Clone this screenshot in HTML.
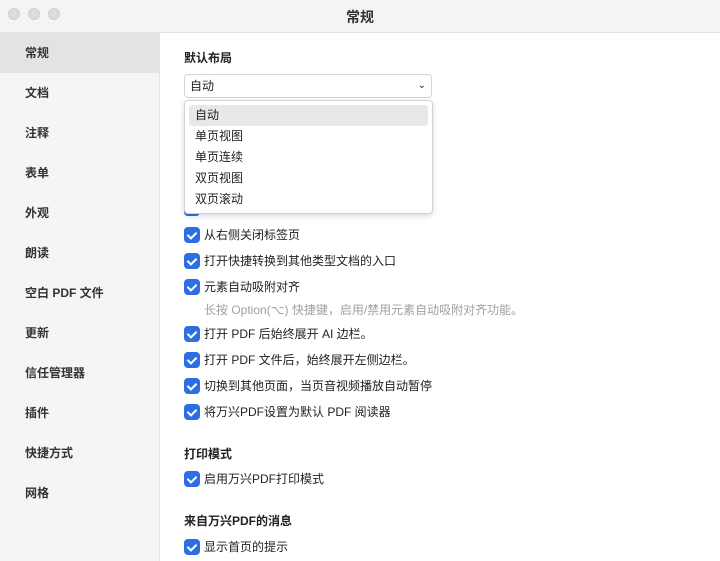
<!DOCTYPE html><html><head><meta charset="utf-8"><style>
*{margin:0;padding:0;box-sizing:border-box}
body{width:720px;height:561px;overflow:hidden;background:#fff;font-family:"Liberation Sans","Noto Sans CJK SC",sans-serif;font-size:12px;color:#222;position:relative}
.tb{position:absolute;left:0;top:0;width:720px;height:33px;background:#f4f4f6;border-bottom:1px solid #e2e2e4;text-align:center;line-height:34px;font-size:14px;font-weight:bold;color:#333}
.dot{position:absolute;top:8px;width:12px;height:12px;border-radius:50%;background:#dcdcde;border:1px solid #cfcfd1}
.sb{position:absolute;left:0;top:33px;width:160px;height:528px;background:#f5f5f7;border-right:1px solid #e6e6e8}
.si{height:40px;line-height:40px;padding-left:25px;font-size:12px;color:#333;font-weight:bold}
.si.sel{background:#e3e3e6}
.h{position:absolute;left:184px;font-weight:bold;font-size:12px;color:#222}
.sel-box{position:absolute;left:184px;top:74px;width:248px;height:24px;border:1px solid #d6d6d8;border-radius:4px;line-height:22px;padding-left:5px}
.dd{position:absolute;left:184px;top:100px;width:249px;height:114px;background:#fff;border:1px solid #d4d4d6;border-radius:4px;box-shadow:0 2px 6px rgba(0,0,0,.15);padding:4px}
.dd div{height:21px;line-height:21px;padding-left:6px;border-radius:3px}
.cb{position:absolute;left:184px;height:16px;line-height:16px;padding-left:20px;white-space:nowrap}
.cb:before{content:"";position:absolute;left:0;top:0;width:16px;height:16px;border-radius:4px;background:#2d6fe2}
.cb:after{content:"";position:absolute;left:5px;top:3px;width:4px;height:7px;border:solid #fff;border-width:0 2px 2px 0;transform:rotate(45deg)}
.note{position:absolute;left:204px;top:301px;color:#a0a0a4}
</style></head><body>
<div class="tb">常规</div>
<div class="dot" style="left:8px"></div><div class="dot" style="left:28px"></div><div class="dot" style="left:48px"></div>
<div class="sb">
<div class="si sel">常规</div><div class="si">文档</div><div class="si">注释</div><div class="si">表单</div><div class="si">外观</div><div class="si">朗读</div><div class="si">空白 PDF 文件</div><div class="si">更新</div><div class="si">信任管理器</div><div class="si">插件</div><div class="si">快捷方式</div><div class="si">网格</div>
</div>
<div class="h" style="top:49px">默认布局</div>
<div class="sel-box">自动<span style="position:absolute;right:5px;top:0;font-size:10px">⌄</span></div>
<div class="cb" style="top:200px">自动保存 PDF 文件</div>
<div class="dd"><div style="background:#e8e8ea">自动</div><div>单页视图</div><div>单页连续</div><div>双页视图</div><div>双页滚动</div></div>
<div class="cb" style="top:227px">从右侧关闭标签页</div>
<div class="cb" style="top:253px">打开快捷转换到其他类型文档的入口</div>
<div class="cb" style="top:279px">元素自动吸附对齐</div>
<div class="note">长按 Option(⌥) 快捷键，启用/禁用元素自动吸附对齐功能。</div>
<div class="cb" style="top:326px">打开 PDF 后始终展开 AI 边栏。</div>
<div class="cb" style="top:352px">打开 PDF 文件后，始终展开左侧边栏。</div>
<div class="cb" style="top:378px">切换到其他页面，当页音视频播放自动暂停</div>
<div class="cb" style="top:404px">将万兴PDF设置为默认 PDF 阅读器</div>
<div class="h" style="top:445px">打印模式</div>
<div class="cb" style="top:471px">启用万兴PDF打印模式</div>
<div class="h" style="top:512px">来自万兴PDF的消息</div>
<div class="cb" style="top:539px">显示首页的提示</div>
</body></html>
